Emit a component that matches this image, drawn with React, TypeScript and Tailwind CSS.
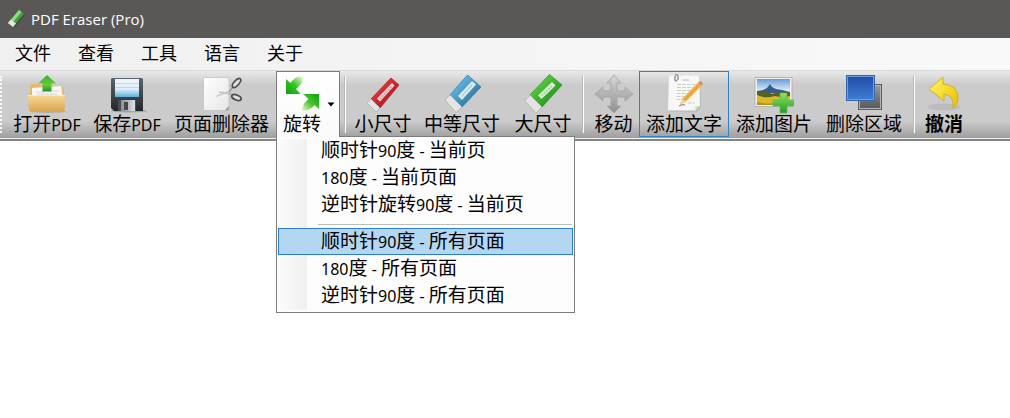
import { ReactNode } from "react";
import clsx from "clsx";

const MENUS = ["文件", "查看", "工具", "语言", "关于"];

const ROTATE_CURRENT = ["顺时针90度 - 当前页", "180度 - 当前页面", "逆时针旋转90度 - 当前页"];
const ROTATE_ALL = ["顺时针90度 - 所有页面", "180度 - 所有页面", "逆时针90度 - 所有页面"];

// Latin runs are set a little smaller than the Chinese around them
function Label({ text }: { text: string }) {
  return (
    <>
      {text.split(/([A-Za-z0-9 -]+)/).map((part, i) =>
        i % 2 ? (
          <span key={i} className="text-[16px]">
            {part}
          </span>
        ) : (
          part
        )
      )}
    </>
  );
}

function Icon({ children }: { children: ReactNode }) {
  return (
    <svg viewBox="0 0 40 40" className="w-10 h-10 shrink-0" aria-hidden="true">
      {children}
    </svg>
  );
}

function OpenIcon() {
  return (
    <Icon>
      <defs>
        <linearGradient id="folder" x1="0" y1="0" x2="0" y2="1">
          <stop offset="0" stopColor="#f8d898" />
          <stop offset="1" stopColor="#dda84e" />
        </linearGradient>
        <linearGradient id="up" x1="0" y1="0" x2="0" y2="1">
          <stop offset="0" stopColor="#3fae25" />
          <stop offset="0.6" stopColor="#62cc3a" />
          <stop offset="1" stopColor="#2c8d22" />
        </linearGradient>
      </defs>
      <ellipse cx="21" cy="37.5" rx="18" ry="1.5" fill="#a09a8e" opacity="0.6" />
      <path d="M3 12 L5 10 H12 L14 12 H35 L37 15 V28 H3Z" fill="#e5b96b" />
      <path d="M5 14 L34 12 L36 24 H5Z" fill="#f7f7f4" />
      <path d="M9 18 H17 M10 20 H30 M25 17 H32" stroke="#d6d6d6" />
      <path d="M1 21 H38 L37.5 37 H2Z" fill="url(#folder)" />
      <path d="M1 21.5 H38" stroke="#fbe6b5" />
      <path d="M20 1 L29 9.5 H24.5 V17.5 H15.5 V9.5 H11Z" fill="url(#up)" />
    </Icon>
  );
}

function SaveIcon() {
  return (
    <Icon>
      <defs>
        <linearGradient id="disk" x1="0" y1="0" x2="0" y2="1">
          <stop offset="0" stopColor="#5c646d" />
          <stop offset="1" stopColor="#23272c" />
        </linearGradient>
        <linearGradient id="sheet" x1="0" y1="0" x2="0" y2="1">
          <stop offset="0" stopColor="#f0f6f9" />
          <stop offset="0.6" stopColor="#d8edf9" />
          <stop offset="1" stopColor="#58aee0" />
        </linearGradient>
        <linearGradient id="shutter">
          <stop offset="0" stopColor="#8b8e93" />
          <stop offset="1" stopColor="#e0e1e4" />
        </linearGradient>
      </defs>
      <ellipse cx="22" cy="37" rx="18" ry="1.5" fill="#777777" opacity="0.5" />
      <path d="M5 4 H35 L36 5 V37 H7 L4 34 V5Z" fill="url(#disk)" />
      <rect x="8" y="5" width="24" height="18" fill="url(#sheet)" />
      <path d="M8 9.5 H32 M8 13.5 H32 M8 17.5 H32" stroke="#bcd3df" strokeWidth="0.8" />
      <rect x="11" y="26" width="18" height="11" fill="#4a4d53" />
      <rect x="14" y="26" width="14" height="11" fill="url(#shutter)" />
      <rect x="17" y="28" width="4" height="8" fill="#44474e" />
    </Icon>
  );
}

function PageCutIcon() {
  return (
    <Icon>
      <defs>
        <linearGradient id="cutpage" x1="0" y1="0" x2="1" y2="1">
          <stop offset="0" stopColor="#ffffff" />
          <stop offset="1" stopColor="#e6e6e6" />
        </linearGradient>
      </defs>
      <path d="M1.5 3.5 H27 V32 L23 36.5 H1.5Z" fill="url(#cutpage)" stroke="#bdbdbd" strokeWidth="0.7" />
      <path d="M23 36.5 L27 32 L26.5 36.5Z" fill="#999999" />
      <path d="M14 22.5 L28 17 M17 18 L28 20" stroke="#c2c2c2" strokeWidth="1.3" />
      <path d="M27 18 L31 13 M27 19.5 L31 21" stroke="#999999" strokeWidth="1.3" />
      <ellipse cx="34.5" cy="9" rx="5.5" ry="2.5" transform="rotate(-47 34.5 9)" fill="#dddddd" stroke="#4b4b4b" strokeWidth="1.7" />
      <ellipse cx="34.5" cy="23.5" rx="5" ry="2.5" transform="rotate(23 34.5 23.5)" fill="#dddddd" stroke="#4b4b4b" strokeWidth="1.7" />
    </Icon>
  );
}

function RotateIcon() {
  return (
    <Icon>
      <defs>
        <linearGradient id="rota" gradientUnits="userSpaceOnUse" x1="5" y1="19" x2="20" y2="3">
          <stop offset="0" stopColor="#12a512" />
          <stop offset="0.5" stopColor="#32c421" />
          <stop offset="1" stopColor="#eaf7cc" />
        </linearGradient>
        <linearGradient id="rotb" gradientUnits="userSpaceOnUse" x1="36" y1="21" x2="20" y2="37">
          <stop offset="0" stopColor="#12a512" />
          <stop offset="0.5" stopColor="#4ac52c" />
          <stop offset="1" stopColor="#f3f9d6" />
        </linearGradient>
      </defs>
      <path d="M4 20 V5 L8.5 9 Q12 4 16 2.5 H22 Q20 6 20 9 L14 15 L18.500 20Z" fill="url(#rota)" />
      <path d="M37 20 V35 L32.5 31 Q28 37 18 37 Q22 33 21.5 30 L26.5 25 L21 20Z" fill="url(#rotb)" />
    </Icon>
  );
}

interface EraserProps {
  id: string;
  light: string;
  dark: string;
  body: string;
  tip: string;
  stripe: string;
  mark: string;
}

function EraserIcon({ id, light, dark, body, tip, stripe, mark }: EraserProps) {
  return (
    <Icon>
      <defs>
        <linearGradient id={id} x1="0.2" y1="0.2" x2="0.7" y2="0.7">
          <stop offset="0" stopColor={light} />
          <stop offset="1" stopColor={dark} />
        </linearGradient>
      </defs>
      <path d={body} fill={`url(#${id})`} stroke={dark} strokeWidth="0.8" strokeLinejoin="round" />
      <path d={tip} fill="#e4e4e4" stroke="#aaaaaa" strokeWidth="0.7" strokeLinejoin="round" />
      <path d={stripe} fill="#eef3f1" opacity="0.9" />
      <path d={mark} stroke={dark} strokeWidth="1.4" strokeDasharray="2 1" opacity="0.4" />
    </Icon>
  );
}

function MoveIcon() {
  return (
    <Icon>
      <defs>
        <linearGradient id="move" x1="0" y1="0" x2="0" y2="1">
          <stop offset="0" stopColor="#d6d6d6" />
          <stop offset="1" stopColor="#8f8f8f" />
        </linearGradient>
      </defs>
      <path
        d="M20 1 L27 9 H23 V17 H31 V13 L39 20 L31 27 V23 H23 V32 H27 L20 39 L13 32 H17 V23 H9 V27 L1 20 L9 13 V17 H17 V9 H13Z"
        fill="url(#move)"
        stroke="#a2a2a2"
        strokeWidth="0.8"
      />
    </Icon>
  );
}

function AddTextIcon() {
  return (
    <Icon>
      <path d="M6 2 H36 L37 33 L33 37.5 H5Z" fill="#b5b5b5" />
      <path d="M5 1.5 H35.5 L36 32 L31.5 36.5 H4Z" fill="#f7f7f5" />
      <path
        d="M13 10.5 H31 M13 13.5 H29 M13 16.5 H29 M12.5 19.5 H28 M12.5 22.5 H23 M12.5 25.5 H20 M24 29 H31"
        stroke="#cccccc"
        strokeDasharray="4 1"
      />
      <path d="M18 6 H25" stroke="#bbbbbb" />
      <path d="M11 1 Q14 0 14 3 V6 M11 2 V6 Q12 8 13 6" fill="none" stroke="#888888" strokeWidth="1.3" />
      <path d="M31.5 36.5 L31.5 32.5 L36 32Z" fill="#cccccc" />
      <path d="M34 8.5 L38 11.5 L22 27.5 L16 31 L18 25Z" fill="#f2b352" />
      <path d="M36 10 L20 26.5" stroke="#e39c3a" strokeWidth="1.3" />
      <path d="M34 8.5 L36 7 L39 9.5 L38 11.5Z" fill="#d8876c" />
      <path d="M18 25 L22 27.5 L16 31Z" fill="#edd5ab" />
      <path d="M15 32 Q18 30 21 31" fill="none" stroke="#777777" />
    </Icon>
  );
}

function AddPictureIcon() {
  return (
    <Icon>
      <defs>
        <linearGradient id="sky" x1="0" y1="0" x2="0" y2="1">
          <stop offset="0" stopColor="#679bd5" />
          <stop offset="0.5" stopColor="#eef4fb" />
        </linearGradient>
        <linearGradient id="plus" x1="0" y1="0" x2="0" y2="1">
          <stop offset="0" stopColor="#8ce36c" />
          <stop offset="1" stopColor="#249c18" />
        </linearGradient>
      </defs>
      <rect x="1" y="3.5" width="37" height="29" fill="#efefed" stroke="#aaaaaa" strokeWidth="0.8" />
      <rect x="3" y="5" width="33" height="26" fill="url(#sky)" />
      <path d="M3 17 L9 16 L13 14 L16 10 L18 13 L22 15 L28 16 L36 18 V21 H3Z" fill="#365a8b" />
      <rect x="3" y="19" width="33" height="12" fill="#d9ba26" />
      <path d="M3 18 Q12 16 18 20 Q27 16 36 19 V22 Q28 24 21 22 Q11 25 3 21Z" fill="#546226" />
      <path d="M3 28 Q15 31 25 28 L36 29 V31 H3Z" fill="#a69a1d" />
      <path d="M26 19 H33 V26 H40 V32 H33 V39 H26 V32 H19 V26 H26Z" fill="url(#plus)" stroke="#62b754" strokeWidth="0.7" />
    </Icon>
  );
}

function DeleteAreaIcon() {
  return (
    <Icon>
      <defs>
        <linearGradient id="front" x1="0" y1="0" x2="0" y2="1">
          <stop offset="0" stopColor="#214da4" />
          <stop offset="1" stopColor="#3f7ed4" />
        </linearGradient>
        <linearGradient id="back" x1="0" y1="0" x2="0" y2="1">
          <stop offset="0" stopColor="#9c9c9c" />
          <stop offset="1" stopColor="#555555" />
        </linearGradient>
      </defs>
      <rect x="14.5" y="10.5" width="23" height="25" fill="url(#back)" stroke="#5c5c5c" />
      <rect x="15.5" y="11.5" width="21" height="23" fill="none" stroke="#b5b5b5" />
      <rect x="2.5" y="1.5" width="28" height="25" fill="url(#front)" stroke="#3566ad" />
      <rect x="3.5" y="2.5" width="26" height="23" fill="none" stroke="#729bdc" />
    </Icon>
  );
}

function UndoIcon() {
  return (
    <Icon>
      <defs>
        <linearGradient id="undo" x1="0" y1="0" x2="1" y2="1">
          <stop offset="0" stopColor="#fff27b" />
          <stop offset="0.6" stopColor="#f3d51f" />
          <stop offset="1" stopColor="#e2bd05" />
        </linearGradient>
      </defs>
      <ellipse cx="20" cy="33" rx="16" ry="3.5" fill="#999999" opacity="0.3" />
      <path
        d="M5 15 L19 3 V10 Q34 11 34 24 Q34 30 29 35 Q31 22 20 20 V27Z"
        fill="url(#undo)"
        stroke="#d0b021"
        strokeLinejoin="round"
      />
    </Icon>
  );
}

interface ToolButtonProps {
  label: string;
  icon: ReactNode;
  width: string;
  selected?: boolean;
  bold?: boolean;
}

function ToolButton({ label, icon, width, selected, bold }: ToolButtonProps) {
  return (
    <button
      type="button"
      aria-pressed={selected}
      className={clsx(
        "flex h-[66px] shrink-0 flex-col items-center border pt-[2px] whitespace-nowrap",
        width,
        selected ? "border-[#2f82c4]" : "border-transparent",
        bold && "font-bold"
      )}
    >
      {icon}
      <span className="leading-[20px]">
        <Label text={label} />
      </span>
    </button>
  );
}

function Separator() {
  return (
    <div className="flex w-[10px] shrink-0 justify-center py-[5px]">
      <div className="w-[2px] border-l border-[#b8b8b8] bg-white" />
    </div>
  );
}

function MenuItem({ text, active }: { text: string; active?: boolean }) {
  return (
    <button
      type="button"
      role="menuitem"
      className={clsx(
        "flex h-[27px] w-full items-center border pl-[42px] whitespace-nowrap",
        active ? "border-[#2a80c8] bg-[#b3d7f3]" : "border-transparent"
      )}
    >
      <span className="leading-[25px]">
        <Label text={text} />
      </span>
    </button>
  );
}

function RotateMenu() {
  return (
    <div
      role="menu"
      className="absolute top-[65px] left-0 z-10 w-[299px] border border-[#7c7c7c] bg-[#fdfdfd] px-px pb-[3px]"
    >
      <div className="absolute inset-y-[2px] left-[2px] w-7 bg-gradient-to-r from-[#fbfbfb] to-[#f0f0f0]" />
      <div className="relative">
        {ROTATE_CURRENT.map((text) => (
          <MenuItem key={text} text={text} />
        ))}
        <div className="mt-[6px] mr-px mb-[3px] ml-[40px] border-t border-[#bdbdbd]" />
        {ROTATE_ALL.map((text, i) => (
          <MenuItem key={text} text={text} active={i === 0} />
        ))}
      </div>
    </div>
  );
}

export default function App() {
  return (
    <div className="min-h-screen bg-white font-['Noto_Sans','Noto_Sans_CJK_SC',sans-serif] text-[19px] text-black">
      <header className="flex h-[38px] items-center gap-[6px] bg-[#5a5856] pl-[7px] font-['Open_Sans',sans-serif] text-[15px] text-white">
        <svg viewBox="0 0 18 20" className="h-5 w-[18px]" aria-hidden="true">
          <path d="M12 1 L18 6 L7 19 L1 15Z" fill="#3d493a" />
          <path d="M12 1 L17 5 L6 18 L1 14Z" fill="#43a13b" />
          <path d="M12 1 L14.5 3 L3.5 16 L1 14Z" fill="#8fdc84" />
          <path d="M4 10.5 L9 14.5 L6 18 L1 14Z" fill="#e2e7e0" />
        </svg>
        <h1>PDF Eraser (Pro)</h1>
      </header>

      <nav className="flex h-8 items-center gap-[27px] bg-gradient-to-r from-[#f0f0f0] to-[#f9f9f9] pb-[2px] pl-[15px] text-[18px]">
        {MENUS.map((name) => (
          <button key={name} type="button" className="leading-[24px] whitespace-nowrap">
            {name}
          </button>
        ))}
      </nav>

      <div
        role="toolbar"
        className="flex h-[71px] border-t border-b-2 border-t-[#d8d8d8] border-b-[#858585] bg-gradient-to-b from-[#e9e9e9] from-0% via-[#cbcbcb] via-20% to-[#cbcbcb] to-75%"
      >
        <div className="flex w-full border-b border-[#f4f4f4] bg-gradient-to-b from-transparent from-75% to-[#9e9e9e]">
          <div className="my-[5px] mr-[5px] w-[2px] border-r-2 border-dotted border-[#f9f9f9]" />
          <ToolButton label="打开PDF" icon={<OpenIcon />} width="w-20" />
          <ToolButton label="保存PDF" icon={<SaveIcon />} width="w-20" />
          <ToolButton label="页面删除器" icon={<PageCutIcon />} width="w-[109px]" />

          <div className="relative shrink-0">
            <button
              type="button"
              aria-haspopup="menu"
              aria-expanded="true"
              className="relative z-20 flex h-[66px] w-16 items-center border border-b-0 border-[#7c7c7c] bg-gradient-to-b from-white to-[#fafafa] pl-[5px]"
            >
              <span className="flex h-full flex-col items-center pt-[2px]">
                <RotateIcon />
                <span className="leading-[20px]">旋转</span>
              </span>
              <svg viewBox="0 0 8 5" className="ml-[5px] h-[5px] w-2" aria-hidden="true">
                <path d="M0.5 0.5 H7.5 L4 4.5Z" fill="black" />
              </svg>
            </button>
            <RotateMenu />
          </div>

          <Separator />
          <ToolButton
            label="小尺寸"
            width="w-[66px]"
            icon={
              <EraserIcon
                id="red"
                light="#ee3d3b"
                dark="#b81a22"
                body="M28 4 L36 11 L17 34 L8 25Z"
                tip="M8 25 L17 34 L13 38 L4 29Z"
                stripe="M29 9 L31.5 11.5 L17 27.500 L14 24.5Z"
                mark="M28.5 12.5 L17 25"
              />
            }
          />
          <ToolButton
            label="中等尺寸"
            width="w-[92px]"
            icon={
              <EraserIcon
                id="blue"
                light="#66bce6"
                dark="#3580ab"
                body="M25.5 1 L39 13 L20 33 L8 21Z"
                tip="M8 21 L20 33 L14 38.5 L3 26Z"
                stripe="M30 7 L34 10.5 L20 26 L16 22Z"
                mark="M30 11 L19.5 22.5"
              />
            }
          />
          <ToolButton
            label="大尺寸"
            width="w-[70px]"
            icon={
              <EraserIcon
                id="green"
                light="#5fcf3f"
                dark="#319a27"
                body="M26.5 0.5 L39 11 L19 33 L7 21Z"
                tip="M7 21 L19 33 L13 39 L2 27Z"
                stripe="M29 8 L32.5 11.5 L18.5 25 L15 21.5Z"
                mark="M29 12 L18.5 21.5"
              />
            }
          />
          <Separator />
          <ToolButton label="移动" icon={<MoveIcon />} width="w-[51px]" />
          <ToolButton label="添加文字" icon={<AddTextIcon />} width="w-[90px]" selected />
          <ToolButton label="添加图片" icon={<AddPictureIcon />} width="w-[90px]" />
          <ToolButton label="删除区域" icon={<DeleteAreaIcon />} width="w-[90px]" />
          <Separator />
          <ToolButton label="撤消" icon={<UndoIcon />} width="w-[50px]" bold />
        </div>
      </div>
    </div>
  );
}
